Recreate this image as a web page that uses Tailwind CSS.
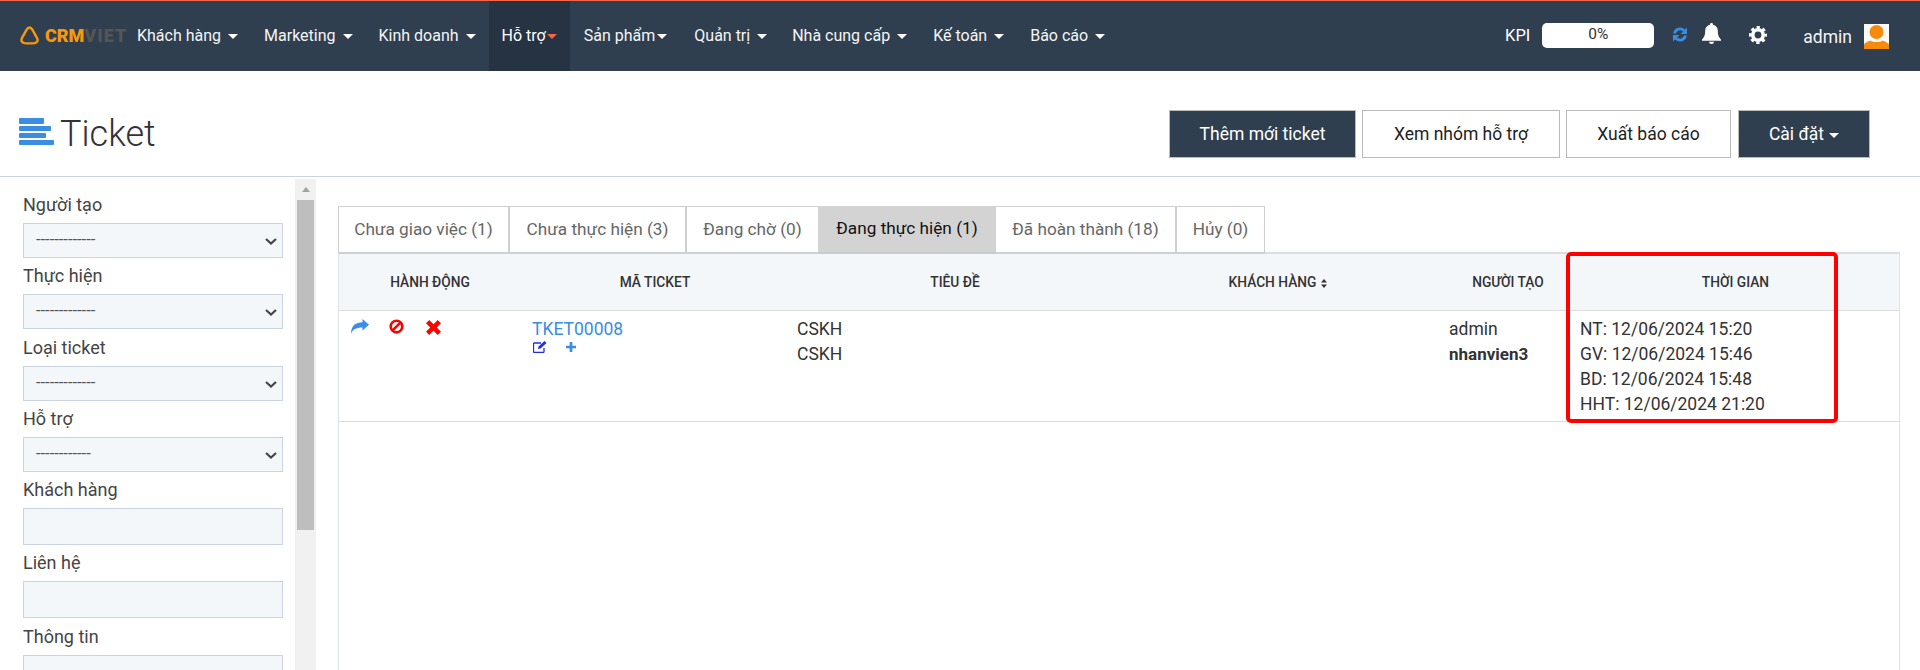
<!DOCTYPE html>
<html lang="vi">
<head>
    <meta charset="UTF-8">
    <title>Ticket</title>
    <script src="https://cdn.jsdelivr.net/npm/@tailwindcss/browser@4"></script>
</head>
<body class="h-[670px] overflow-hidden bg-white text-[#333] font-['Roboto',sans-serif] text-[17.5px]">
    <!-- Top navigation -->
    <nav class="h-[71px] bg-[#2f3f50] border-t-[1px] border-[#f4664a] flex items-start text-white">
        <div class="w-[124px] shrink-0 h-[70px] flex items-center pl-[19px] pb-[1px]">
            <svg class="shrink-0" width="21" height="19" viewBox="0 0 21 19" fill="none" stroke="#f7980d" stroke-width="2.4"><path d="M10.5 1.5c1.3 0 2.2 1 3 2.4l4.6 8.2c1.4 2.6 0 4.6-2.6 5-3.2.4-6.800.4-10 0-2.600-.4-4-2.400-2.600-5l4.600-8.200c.8-1.400 1.700-2.400 3-2.400z"/></svg>
            <span class="ml-[5px] font-black text-[18px] leading-none text-[#f7980d]">CRM</span><span class="font-black text-[18px] leading-none text-[#555] tracking-[1px]">VIET</span>
        </div>
        <ul class="flex h-[70px] text-[16px]">
            <li class="px-[13px] h-full flex items-center text-[#f5f5f5]">Khách hàng<i class="ml-[7px] border-x-[5px] border-t-[5px] border-x-transparent border-t-white"></i></li>
            <li class="px-[13px] h-full flex items-center text-[#f5f5f5]">Marketing<i class="ml-[7px] border-x-[5px] border-t-[5px] border-x-transparent border-t-white"></i></li>
            <li class="px-[13px] h-full flex items-center text-[#f5f5f5]">Kinh doanh<i class="ml-[7px] border-x-[5px] border-t-[5px] border-x-transparent border-t-white"></i></li>
            <li class="px-[13px] h-full flex items-center bg-[#263343]">Hỗ trợ<i class="ml-[1px] border-x-[5px] border-t-[5px] border-x-transparent border-t-[#f4664a]"></i></li>
            <li class="pl-[14px] pr-[14px] h-full flex items-center text-[#f5f5f5]">Sản phẩm<i class="ml-[2px] border-x-[5px] border-t-[5px] border-x-transparent border-t-white"></i></li>
            <li class="pl-[13px] pr-[12px] h-full flex items-center text-[#f5f5f5]">Quản trị<i class="ml-[7px] border-x-[5px] border-t-[5px] border-x-transparent border-t-white"></i></li>
            <li class="px-[13px] h-full flex items-center text-[#f5f5f5]">Nhà cung cấp<i class="ml-[7px] border-x-[5px] border-t-[5px] border-x-transparent border-t-white"></i></li>
            <li class="px-[13px] h-full flex items-center text-[#f5f5f5]">Kế toán<i class="ml-[7px] border-x-[5px] border-t-[5px] border-x-transparent border-t-white"></i></li>
            <li class="px-[13px] h-full flex items-center text-[#f5f5f5]">Báo cáo<i class="ml-[7px] border-x-[5px] border-t-[5px] border-x-transparent border-t-white"></i></li>
        </ul>
        <div class="ml-auto flex items-center h-[70px] pr-[31px] pb-[2px]">
            <span class="text-[16.500px] mt-[2px]">KPI</span>
            <div class="ml-[12px] w-[112px] h-[25px] bg-white rounded-[5px] text-[#333] text-[15.500px] flex items-center justify-center">0%</div>
            <svg class="ml-[18px] mb-[1px]" width="16" height="15" viewBox="0 0 16 15" fill="#3a8de0"><path d="M2.500 6.500A5.500 5.500 0 0 1 12 3.800M13.500 8.500A5.500 5.500 0 0 1 4 11.200" fill="none" stroke="#3a8de0" stroke-width="2.800"/><path d="M15 .500V7H8.500zM1 14.500V8h6.500z"/></svg>
            <svg class="ml-[13px] mb-[4px]" width="21" height="21" viewBox="0 0 21 21" fill="#fff"><path d="M10.500 0a1.500 1.500 0 0 0-1.500 1.700C6.200 2.300 4.200 4.600 4.200 7.500c0 5-1.100 6.800-3.200 9v1.300h19v-1.300c-2.100-2.200-3.200-4-3.200-9 0-2.900-2-5.200-4.800-5.800A1.500 1.500 0 0 0 10.500 0zM8 18.700a2.500 2.300 0 0 0 5 0z"/></svg>
            <svg class="ml-[27px] mb-[1px]" width="18" height="18" viewBox="0 0 18 18" fill="none" stroke="#fff"><circle cx="9" cy="9" r="5.200" stroke-width="3.600"/><circle cx="9" cy="9" r="7.600" stroke-width="2.800" stroke-dasharray="3.200 2.770" stroke-dashoffset="1.600"/></svg>
            <span class="ml-[36px] text-[#f5f5f5] mt-[5px]">admin</span>
            <svg class="ml-[12px] mt-[3px]" width="25" height="25" viewBox="0 0 25 25"><rect width="25" height="25" fill="#fbfbfb"/><circle cx="12.500" cy="8" r="7" fill="#f7890d"/><path d="M0 25v-4c0-2 4-3.500 6.500-4.500 2 2 10 2 12 0 2.500 1 6.500 2.500 6.500 4.500v4z" fill="#f7890d"/></svg>
        </div>
    </nav>

    <!-- Page heading -->
    <header class="h-[106px] border-b border-[#cbd5e1] flex items-start pl-[19px] pr-[50px]">
        <div class="flex flex-col gap-[2px] mt-[47px]">
            <span class="block w-[25px] h-[6px] rounded-[1px] bg-[#3a8de0]"></span>
            <span class="block w-[32px] h-[5px] rounded-[1px] bg-[#3a8de0]"></span>
            <span class="block w-[27px] h-[5px] rounded-[1px] bg-[#3a8de0]"></span>
            <span class="block w-[35px] h-[5px] rounded-[1px] bg-[#3a8de0]"></span>
        </div>
        <h1 class="ml-[6px] mt-[41px] text-[36px] leading-[44px] font-light text-[#333]">Ticket</h1>
        <div class="ml-auto mt-[39px] flex">
            <button class="w-[187px] h-[48px] pt-[1px] bg-[#2f3f50] border border-[#bbb] text-white">Thêm mới ticket</button>
            <button class="ml-[6px] w-[198px] h-[48px] pt-[1px] bg-white border border-[#bbb] text-[#222]">Xem nhóm hỗ trợ</button>
            <button class="ml-[6px] w-[165px] h-[48px] pt-[1px] bg-white border border-[#bbb] text-[#222]">Xuất báo cáo</button>
            <button class="ml-[7px] w-[132px] h-[48px] pt-[1px] bg-[#2f3f50] border border-[#bbb] text-white">Cài đặt<i class="inline-block ml-[5px] mb-[2px] border-x-[5px] border-t-[5px] border-x-transparent border-t-white"></i></button>
        </div>
    </header>

    <div class="flex h-[493px] overflow-hidden">
        <!-- Filters -->
        <aside class="w-[295px] pl-[23px] pr-[12px] pt-[10px] text-[#444] text-[18px] shrink-0">
            <label class="block h-[36px] leading-[36px]">Người tạo</label>
            <div class="relative">
                <select class="block w-full h-[35px] appearance-none bg-[#f3f7fa] border border-[#cbd5e1] px-[12px] text-[16.500px] text-[#555]"><option>-------------</option></select>
                <svg class="absolute right-[6px] top-[15px]" width="12" height="7" viewBox="0 0 12 7" fill="none" stroke="#444" stroke-width="2.200"><path d="M1 1l5 4.500L11 1"/></svg>
            </div>
            <label class="block h-[36px] leading-[36px]">Thực hiện</label>
            <div class="relative">
                <select class="block w-full h-[35px] appearance-none bg-[#f3f7fa] border border-[#cbd5e1] px-[12px] text-[16.500px] text-[#555]"><option>-------------</option></select>
                <svg class="absolute right-[6px] top-[15px]" width="12" height="7" viewBox="0 0 12 7" fill="none" stroke="#444" stroke-width="2.200"><path d="M1 1l5 4.500L11 1"/></svg>
            </div>
            <label class="block h-[37px] leading-[37px]">Loại ticket</label>
            <div class="relative">
                <select class="block w-full h-[35px] appearance-none bg-[#f3f7fa] border border-[#cbd5e1] px-[12px] text-[16.500px] text-[#555]"><option>-------------</option></select>
                <svg class="absolute right-[6px] top-[15px]" width="12" height="7" viewBox="0 0 12 7" fill="none" stroke="#444" stroke-width="2.200"><path d="M1 1l5 4.500L11 1"/></svg>
            </div>
            <label class="block h-[36px] leading-[36px]">Hỗ trợ</label>
            <div class="relative">
                <select class="block w-full h-[35px] appearance-none bg-[#f3f7fa] border border-[#cbd5e1] px-[12px] text-[16.500px] text-[#555]"><option>------------</option></select>
                <svg class="absolute right-[6px] top-[15px]" width="12" height="7" viewBox="0 0 12 7" fill="none" stroke="#444" stroke-width="2.200"><path d="M1 1l5 4.500L11 1"/></svg>
            </div>
            <label class="block h-[36px] leading-[36px]">Khách hàng</label>
            <input class="block w-full h-[37px] bg-[#f3f7fa] border border-[#cbd5e1]">
            <label class="block h-[36px] leading-[36px]">Liên hệ</label>
            <input class="block w-full h-[37px] bg-[#f3f7fa] border border-[#cbd5e1]">
            <label class="block h-[37px] leading-[37px]">Thông tin</label>
            <input class="block w-full h-[37px] bg-[#f3f7fa] border border-[#cbd5e1]">
        </aside>

        <!-- Scrollbar -->
        <div class="w-[21px] shrink-0 mt-[2px] bg-[#f1f1f1] flex flex-col items-center">
            <div class="h-[21px] flex items-center justify-center"><i class="border-x-[4px] border-b-[5px] border-x-transparent border-b-[#a3a3a3]"></i></div>
            <div class="w-[17px] h-[330px] bg-[#bebebe]"></div>
        </div>

        <!-- Ticket list -->
        <main class="flex-1 pl-[22px] pr-[20px] pt-[29px] min-w-0 relative">
            <div class="flex h-[48px] text-[#666] text-[17.200px]">
                <a class="w-[172px] flex items-center justify-center border border-r-2 border-[#d0d0d0] border-b-2">Chưa giao việc (1)</a>
                <a class="w-[177px] flex items-center justify-center border-y border-r-2 border-[#d0d0d0] border-b-2">Chưa thực hiện (3)</a>
                <a class="w-[131px] flex items-center justify-center border-y border-[#d0d0d0] border-b-2">Đang chờ (0)</a>
                <a class="w-[178px] flex items-center justify-center bg-[#d3d3d3] text-[#111] border-b-2 border-[#ccc]">Đang thực hiện (1)</a>
                <a class="w-[181px] flex items-center justify-center border-y border-r-2 border-[#d0d0d0] border-b-2">Đã hoàn thành (18)</a>
                <a class="w-[88px] flex items-center justify-center border-y border-r border-[#d0d0d0] border-b-2">Hủy (0)</a>
                <span class="flex-1 border-b-2 border-[#ddd]"></span>
            </div>
            <div class="h-[420px] border-x border-[#dde3ea]">
                <table class="w-full table-fixed border-collapse">
                    <colgroup>
                        <col class="w-[182px]"><col class="w-[268px]"><col class="w-[332px]"><col class="w-[320px]"><col class="w-[131px]"><col>
                    </colgroup>
                    <thead class="bg-[#f3f7fa] text-[#333] text-[13.750px]">
                        <tr class="h-[56px] border-b border-[#ddd]">
                            <th class="font-medium pt-[2px]">HÀNH ĐỘNG</th>
                            <th class="font-medium pt-[2px]">MÃ TICKET</th>
                            <th class="font-medium pt-[2px]">TIÊU ĐỀ</th>
                            <th class="font-medium pt-[2px] pr-[6px]">KHÁCH HÀNG<svg class="inline ml-[5px] mb-[1px]" width="6" height="9" viewBox="0 0 6 9" fill="#333"><path d="M3 0l3 3.500H0zM3 9L0 5.500h6z"/></svg></th>
                            <th class="font-medium pt-[2px] pl-[3px]">NGƯỜI TẠO</th>
                            <th class="font-medium pt-[2px]">THỜI GIAN</th>
                        </tr>
                    </thead>
                    <tbody>
                        <tr class="h-[111px] border-b border-[#ddd] align-top leading-[25px]">
                            <td class="pl-[12px] pt-[8px]">
                                <div class="flex items-start">
                                    <svg width="18" height="15" viewBox="0 0 18 15" fill="#3a8de0"><path d="M18 5.800 11.500 0v3.200C5 3.400 0 6 0 15c1.500-4.300 5-6.400 11.500-6.400v3z"/></svg>
                                    <svg class="ml-[20px]" width="15" height="15" viewBox="0 0 16 16" fill="none" stroke="#f00" stroke-width="2.800"><circle cx="8" cy="8" r="6.200"/><path d="M3.800 12.200 12.200 3.800"/></svg>
                                    <svg class="ml-[22px] mt-[1px]" width="15" height="15" viewBox="0 0 16 16" fill="#f00"><path d="M3.500 0 8 4.500 12.500 0 16 3.500 11.500 8l4.500 4.500-3.500 3.500L8 11.500 3.500 16 0 12.500 4.500 8 0 3.500z"/></svg>
                                </div>
                            </td>
                            <td class="pl-[11px] pt-[6px]">
                                <a class="block text-[#3a8de0] leading-[24px]">TKET00008</a>
                                <div class="flex items-center ml-[1px]">
                                    <svg width="14" height="12" viewBox="0 0 14 12" preserveAspectRatio="none" fill="none" stroke="#1d2ee8" stroke-width="1.300"><path d="M11 7v3.500a1 1 0 0 1-1 1H1.500a1 1 0 0 1-1-1V3a1 1 0 0 1 1-1H8"/><path d="M5 8l.5-2.500L11.500 0l2 2-6 5.500z" fill="#1d2ee8" stroke="none"/></svg>
                                    <svg class="ml-[19px]" width="10" height="10" viewBox="0 0 11 11" fill="#3a8de0"><path d="M4 0h3v4h4v3H7v4H4V7H0V4h4z"/></svg>
                                </div>
                            </td>
                            <td class="pl-[8px] pt-[6px]">CSKH<br>CSKH</td>
                            <td></td>
                            <td class="pl-[8px] pt-[6px]">admin<br><b class="font-bold text-[17px]">nhanvien3</b></td>
                            <td class="pl-[8px] pt-[6px]">NT: 12/06/2024 15:20<br>GV: 12/06/2024 15:46<br>BD: 12/06/2024 15:48<br>HHT: 12/06/2024 21:20</td>
                        </tr>
                    </tbody>
                </table>
            </div>
            <!-- Red highlight drawn over the time column -->
            <div class="absolute left-[1250px] top-[75px] w-[272px] h-[171px] border-[4px] border-[#f00] rounded-[5px]"></div>
        </main>
    </div>
</body>
</html>
